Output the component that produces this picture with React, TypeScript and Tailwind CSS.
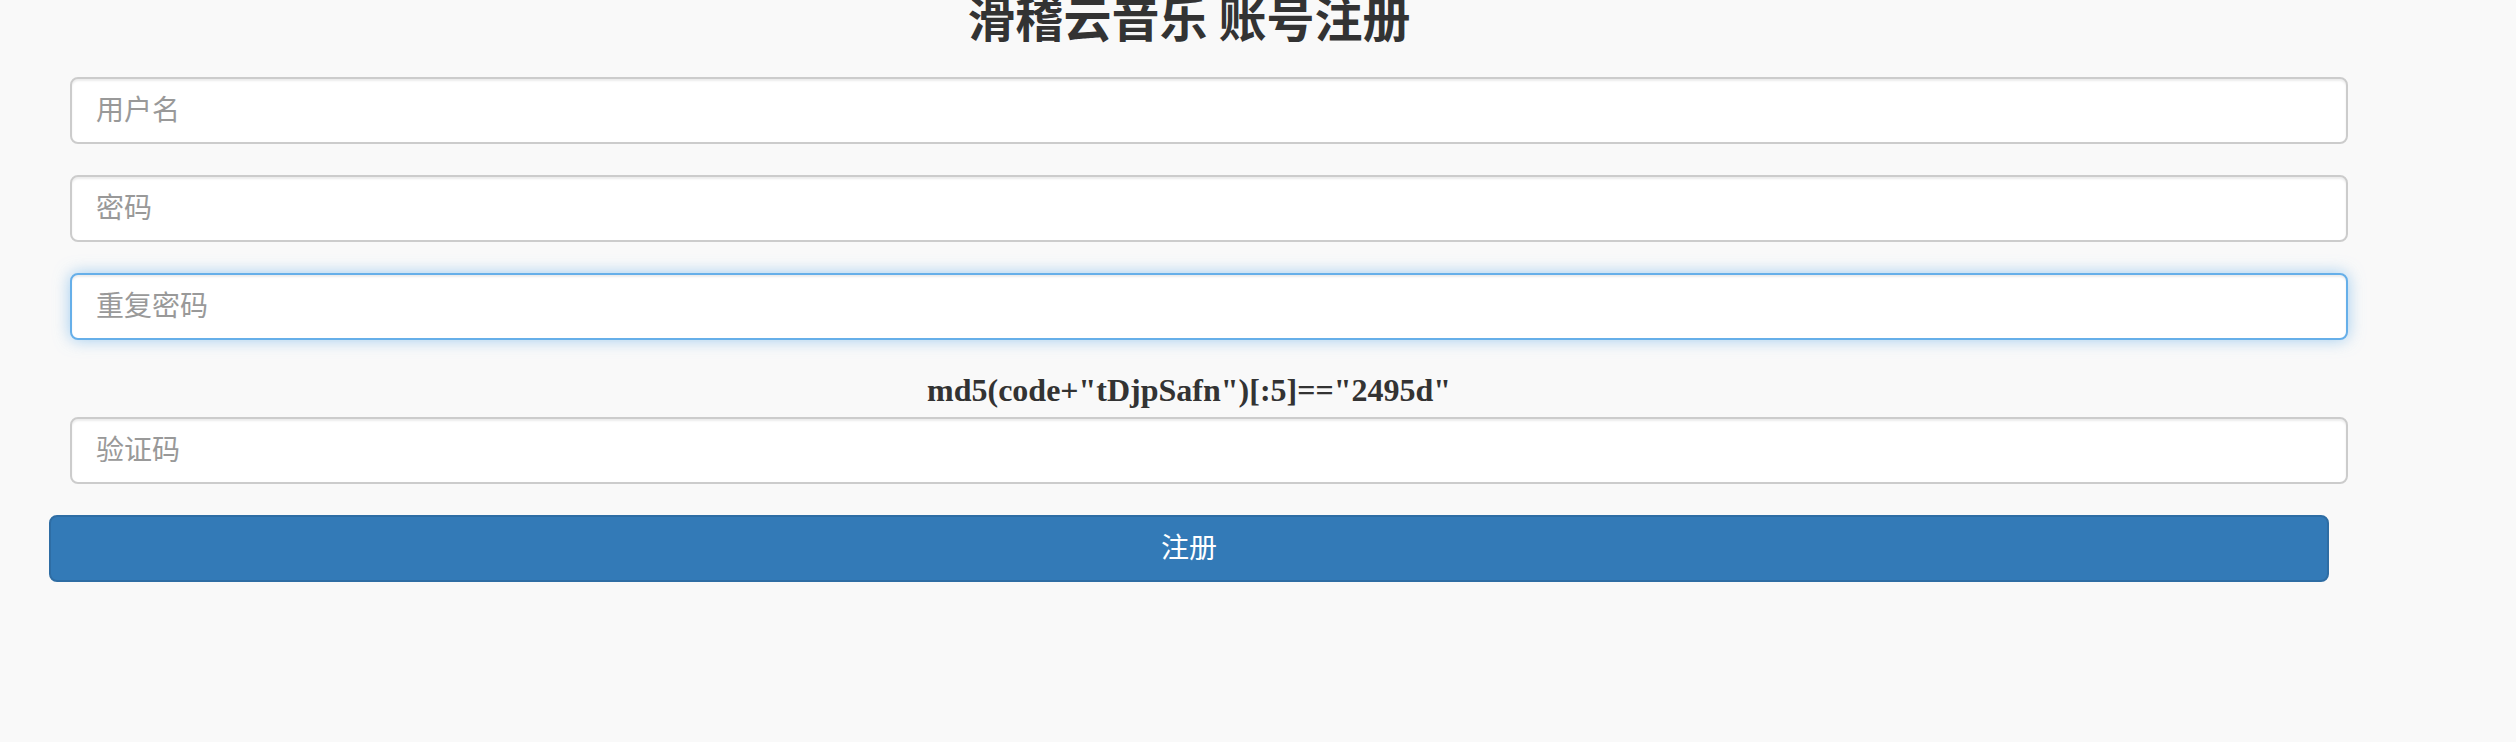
import React from "react";

function Field({ placeholder, focused }: { placeholder: string; focused?: boolean }) {
  return (
    <input
      type="text"
      placeholder={placeholder}
      className={
        "ml-[21px] block h-[67px] w-[2278px] rounded-[8px] border-2 bg-white px-[24px] pb-[5px] font-['Noto_Sans_CJK_SC','Noto_Sans',sans-serif] text-[28px] text-[#555] outline-none placeholder:text-[#999] " +
        (focused
          ? "border-[#66afe9] shadow-[inset_0_2px_2px_rgba(0,0,0,0.075),0_0_16px_rgba(102,175,233,0.6)]"
          : "border-[#ccc] shadow-[inset_0_2px_2px_rgba(0,0,0,0.075)]")
      }
    />
  );
}

export default function App() {
  return (
    <div className="min-h-screen w-full overflow-hidden bg-[#f9f9f9]">
      <div className="flex w-[2329px] flex-col pl-[49px]">
        <div className="mt-[-14px] h-[60px] text-center font-['Noto_Sans_CJK_SC','Noto_Sans',sans-serif] text-[48px] font-bold leading-[60px] text-[#333]">
          滑稽云音乐 账号注册
        </div>
        <div className="mt-[31px] flex flex-col gap-[31px]">
          <Field placeholder="用户名" />
          <Field placeholder="密码" />
          <Field placeholder="重复密码" focused />
        </div>
        <div className="mt-[28px] h-[49px] text-center font-['Liberation_Serif','Times_New_Roman',serif] text-[32px] font-bold leading-[44px] text-[#333]">
          md5(code+"tDjpSafn")[:5]=="2495d"
        </div>
        <Field placeholder="验证码" />
        <button className="mt-[31px] h-[67px] w-[2280px] rounded-[8px] border-2 border-[#2e6da4] bg-[#337ab7] pb-[5px] font-['Noto_Sans_CJK_SC','Noto_Sans',sans-serif] text-[28px] text-white">
          注册
        </button>
      </div>
    </div>
  );
}
